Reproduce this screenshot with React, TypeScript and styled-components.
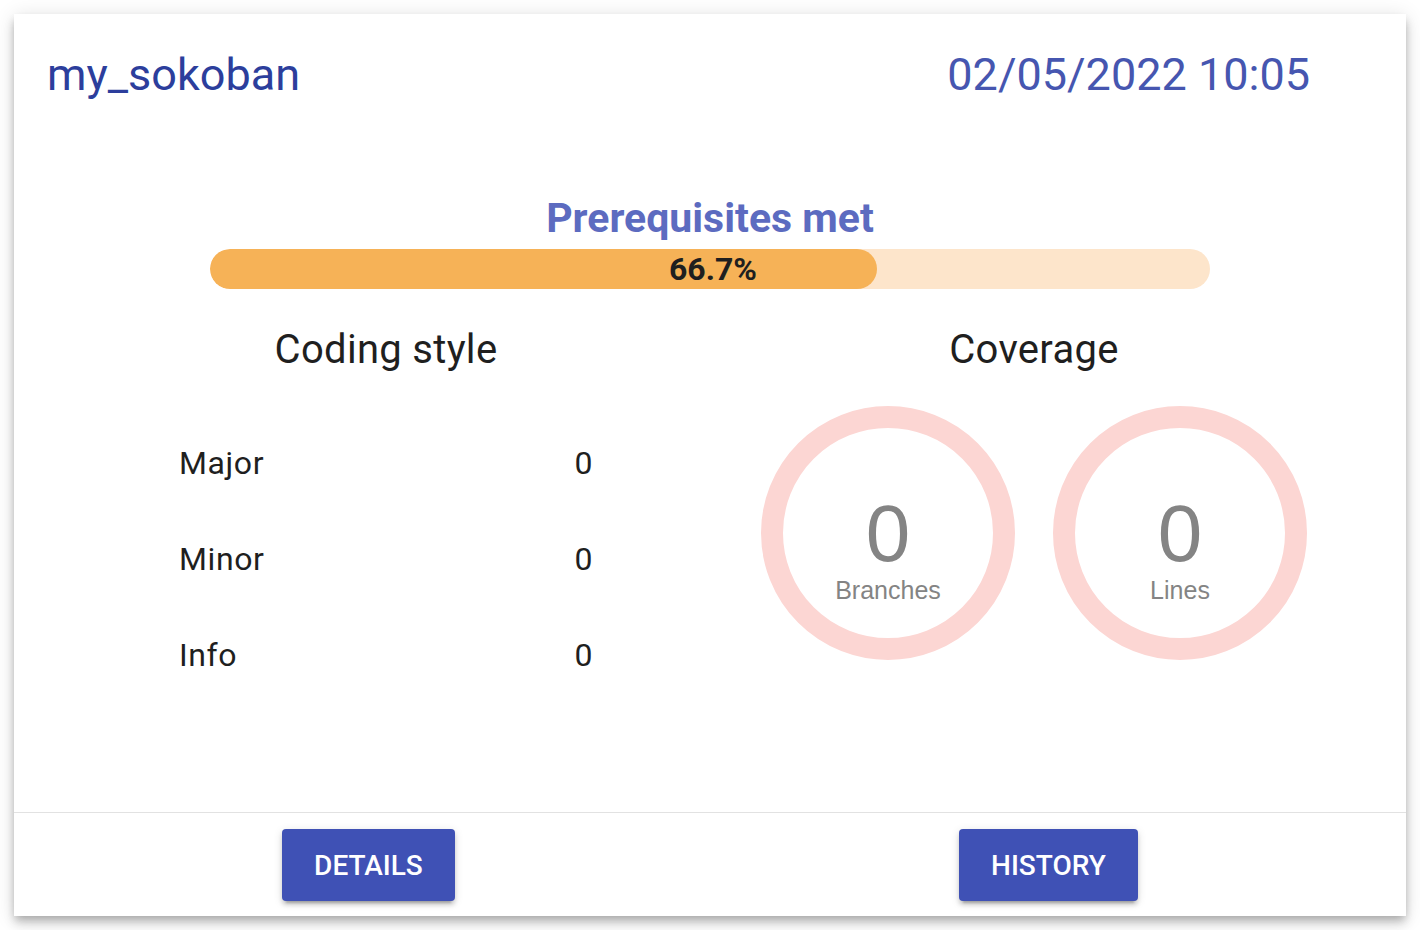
import React from "react";
import styled, { createGlobalStyle } from "styled-components";

const GlobalStyle = createGlobalStyle`
  html, body { margin: 0; padding: 0; background: #ffffff; }
  body { padding: 14px; font-family: Roboto, "Noto Sans", sans-serif; }
  * { box-sizing: border-box; }
`;

const Card = styled.div`
  width: 1392px;
  height: 902px;
  background: #ffffff;
  display: flex;
  flex-direction: column;
  box-shadow: 0 4px 8px -2px rgba(0, 0, 0, 0.2), 0 8px 10px 0 rgba(0, 0, 0, 0.14),
    0 2px 20px 0 rgba(0, 0, 0, 0.12);
`;

const Header = styled.header`
  display: flex;
  justify-content: space-between;
  align-items: center;
  padding: 34px 96px 0 33px;
`;

const Title = styled.h1`
  margin: 0;
  font-family: Roboto, sans-serif;
  font-weight: 400;
  font-size: 45px;
  line-height: 54px;
  color: #2c3e9c;
`;

const DateText = styled.div`
  font-family: Roboto, sans-serif;
  font-size: 45px;
  line-height: 54px;
  color: #4656b0;
`;

const Content = styled.main`
  flex: 1;
  display: flex;
  flex-direction: column;
  align-items: center;
`;

const PrereqTitle = styled.h2`
  margin: 92px 0 0;
  font-family: Roboto, sans-serif;
  font-weight: 700;
  font-size: 41px;
  line-height: 48px;
  color: #5c6bc0;
  text-align: center;
`;

const Bar = styled.div`
  margin-top: 7px;
  width: 1000px;
  height: 40px;
  border-radius: 20px;
  background: #fde5cb;
  display: grid;
  overflow: hidden;
`;

const BarFill = styled.div`
  grid-area: 1 / 1;
  height: 100%;
  border-radius: 20px;
  background: #f6b257;
`;

const BarLabel = styled.span`
  grid-area: 1 / 1;
  align-self: center;
  justify-self: center;
  font-family: Roboto, sans-serif;
  font-weight: 700;
  font-size: 32px;
  line-height: 40px;
  color: #1f1f1f;
  padding-left: 6px;
`;

const Columns = styled.section`
  display: grid;
  grid-template-columns: 648px 648px;
  justify-content: center;
  width: 100%;
  margin-top: 38px;
`;

const Column = styled.div`
  display: flex;
  flex-direction: column;
  align-items: center;
`;

const ColumnTitle = styled.h3`
  margin: 0;
  font-family: Roboto, sans-serif;
  font-weight: 400;
  font-size: 40px;
  line-height: 46px;
  letter-spacing: 0.3px;
  color: #1f1f1f;
`;

const StyleTable = styled.div`
  width: 414px;
  margin-top: 42px;
  display: flex;
  flex-direction: column;
`;

const StyleRow = styled.div`
  height: 96px;
  display: flex;
  justify-content: space-between;
  align-items: center;
  font-family: Roboto, sans-serif;
  font-size: 32px;
  letter-spacing: 0.6px;
  color: #1f1f1f;
`;

const Gauges = styled.div`
  display: flex;
  gap: 38px;
  margin-top: 33px;
`;

const GaugeSvg = styled.svg`
  display: block;
  width: 254px;
  height: 254px;
`;

const Footer = styled.footer`
  border-top: 1px solid #e2e2e2;
  display: flex;
  justify-content: space-around;
  align-items: flex-start;
  padding: 16px 16px 0;
  height: 104px;
`;

const Button = styled.button`
  height: 72px;
  padding: 0 32px;
  border: none;
  border-radius: 4px;
  background: #3f51b5;
  color: #ffffff;
  font-family: Roboto, sans-serif;
  font-weight: 500;
  font-size: 28px;
  text-transform: uppercase;
  cursor: pointer;
  box-shadow: 0 6px 2px -4px rgba(0, 0, 0, 0.2), 0 4px 4px 0 rgba(0, 0, 0, 0.14),
    0 2px 10px 0 rgba(0, 0, 0, 0.12);
`;

const Gauge: React.FC<{ value: number; label: string }> = ({ value, label }) => (
  <GaugeSvg viewBox="0 0 254 254">
    <circle cx="127" cy="127" r="116" fill="none" stroke="#fcd6d3" strokeWidth="22" />
    <text
      x="127"
      y="155"
      textAnchor="middle"
      fontFamily="'Liberation Sans', Arial, sans-serif"
      fontSize="80"
      fill="#848484"
    >
      {value}
    </text>
    <text
      x="127"
      y="193"
      textAnchor="middle"
      fontFamily="'Liberation Sans', Arial, sans-serif"
      fontSize="25"
      fill="#848484"
    >
      {label}
    </text>
  </GaugeSvg>
);

const rows = [
  { label: "Major", value: 0 },
  { label: "Minor", value: 0 },
  { label: "Info", value: 0 },
];

export default function App() {
  const pct = 66.7;
  return (
    <>
      <GlobalStyle />
      <Card>
        <Header>
          <Title>my_sokoban</Title>
          <DateText>02/05/2022 10:05</DateText>
        </Header>
        <Content>
          <PrereqTitle>Prerequisites met</PrereqTitle>
          <Bar>
            <BarFill style={{ width: `${pct}%` }} />
            <BarLabel>{pct}%</BarLabel>
          </Bar>
          <Columns>
            <Column>
              <ColumnTitle>Coding style</ColumnTitle>
              <StyleTable>
                {rows.map((r) => (
                  <StyleRow key={r.label}>
                    <span>{r.label}</span>
                    <span>{r.value}</span>
                  </StyleRow>
                ))}
              </StyleTable>
            </Column>
            <Column>
              <ColumnTitle>Coverage</ColumnTitle>
              <Gauges>
                <Gauge value={0} label="Branches" />
                <Gauge value={0} label="Lines" />
              </Gauges>
            </Column>
          </Columns>
        </Content>
        <Footer>
          <Button>Details</Button>
          <Button>History</Button>
        </Footer>
      </Card>
    </>
  );
}
